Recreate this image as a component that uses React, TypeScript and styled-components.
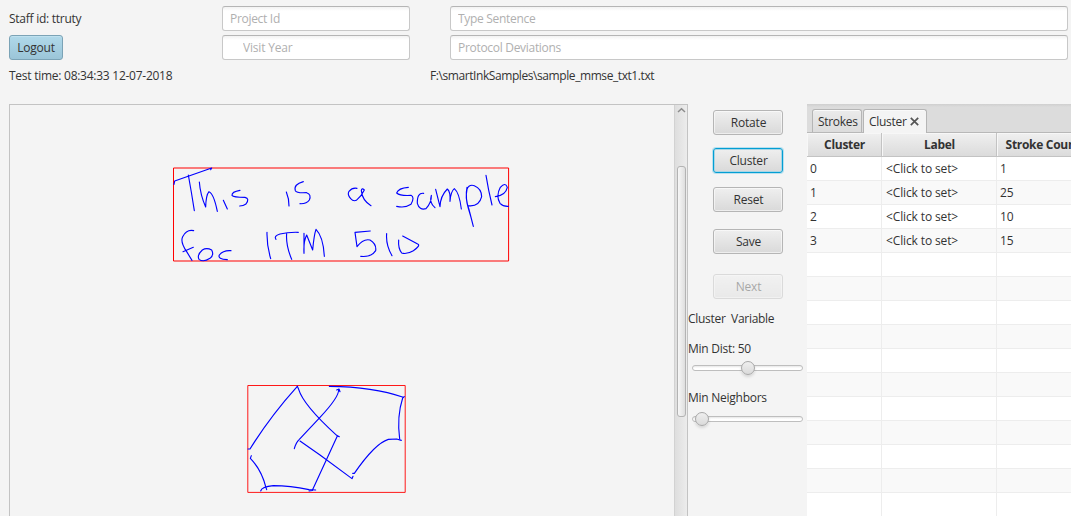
import React from "react";
import styled, { createGlobalStyle, css } from "styled-components";

const GlobalStyle = createGlobalStyle`
  * { box-sizing: border-box; }
  body {
    margin: 0;
    background: #f4f4f4;
    color: #333;
    font: 12px/16px "Open Sans", "Noto Sans", sans-serif;
    letter-spacing: -0.3px;
    overflow: hidden;
  }
`;

const Window = styled.div`
  width: 1071px;
  height: 516px;
  display: flex;
  flex-direction: column;
  overflow: hidden;
  background: #f4f4f4;
`;

const Header = styled.header`
  height: 104px;
  padding: 6px 3px 0 9px;
  display: grid;
  grid-template-columns: 213px 188px 40px 618px;
  grid-template-rows: 25px 25px 24px;
  row-gap: 4px;
  align-items: center;
`;

const Text = styled.span<{ $track?: number }>`
  white-space: pre;
  letter-spacing: ${(p) => p.$track ?? -0.26}px;
`;

const FilePath = styled(Text)`
  grid-column: 3 / 5;
  margin-left: 20px;
`;

const StaffCell = styled(Text)`
  grid-column: 1;
`;

const TestTime = styled(Text)`
  grid-column: 1 / 3;
`;

const Field = styled.input<{ $column: number; $indent?: number; $track?: number }>`
  grid-column: ${(p) => p.$column};
  width: 100%;
  height: 25px;
  padding: 0 7px 0 ${(p) => p.$indent ?? 7}px;
  border: 1px solid #c8c8c8;
  border-top-color: #b5b5b5;
  border-radius: 3px;
  outline: none;
  background: linear-gradient(#f2f2f2, #fff 4px);
  font: inherit;
  letter-spacing: ${(p) => p.$track ?? -0.3}px;
  &::placeholder { color: #b0b0b0; opacity: 1; }
`;

const buttonBase = css`
  height: 25px;
  padding: 0;
  border-radius: 3px;
  color: #333;
  font: inherit;
  text-align: center;
`;

const LogoutButton = styled.button`
  ${buttonBase}
  width: 54px;
  border: 1px solid #7ba3b6;
  background: linear-gradient(#b0d9ea, #9bc5d8);
  box-shadow: inset 0 1px #bfe1ef;
  letter-spacing: -0.2px;
`;

const ActionButton = styled.button<{ $gap: number; $focused?: boolean; $track?: number }>`
  ${buttonBase}
  display: block;
  width: 70px;
  margin: ${(p) => p.$gap}px 0 0 25px;
  padding-left: 1px;
  border: 1px solid #b5b5b5;
  background: linear-gradient(#efefef, #d9d9d9);
  box-shadow: inset 0 0 0 1px rgba(255, 255, 255, 0.55);
  letter-spacing: ${(p) => p.$track ?? -0.2}px;
  ${(p) =>
    p.$focused &&
    css`
      border-color: #039ed3;
      box-shadow: 0 0 0 1px #b9e0ee, inset 0 0 0 1px #a8d6e6;
    `}
  &:disabled {
    opacity: 0.4;
    color: #333;
  }
`;

const Workspace = styled.main`
  flex: 1;
  min-height: 0;
  display: flex;
  padding-left: 9px;
`;

const InkPane = styled.section`
  width: 679px;
  display: flex;
  border: 1px solid #c3c3c3;
  border-bottom: 0;
`;

const InkCanvas = styled.svg`
  width: 664px;
  height: 411px;
  flex: none;
`;

const ScrollBar = styled.div`
  width: 13px;
  display: flex;
  flex-direction: column;
  align-items: center;
  border-left: 1px solid #d2d2d2;
  background: linear-gradient(90deg, #dedede, #ececec);
`;

const ScrollArrow = styled.svg`
  width: 9px;
  height: 6px;
  margin-top: 2px;
  flex: none;
`;

const ScrollThumb = styled.div`
  width: 9px;
  height: 251px;
  margin-top: 53px;
  border: 1px solid #b3b3b3;
  border-radius: 3px;
  background: linear-gradient(90deg, #f7f7f7, #dedede);
`;

const Controls = styled.aside`
  width: 119px;
  flex: none;
`;

const ControlLabel = styled(Text)<{ $gap: number }>`
  display: block;
  margin-top: ${(p) => p.$gap}px;
`;

const SliderTrack = styled.div<{ $gap: number }>`
  display: flex;
  align-items: center;
  width: 111px;
  height: 6px;
  margin: ${(p) => p.$gap}px 0 0 4px;
  border: 1px solid #bebebe;
  border-radius: 3px;
  background: linear-gradient(#e6e6e6, #fff 2px);
`;

const SliderThumb = styled.div<{ $offset: number }>`
  width: 14px;
  height: 14px;
  flex: none;
  margin-left: ${(p) => p.$offset}px;
  border: 1px solid #a8a8a8;
  border-radius: 50%;
  background: linear-gradient(#efefef, #dadada);
  box-shadow: 0 2px 3px rgba(0, 0, 0, 0.12);
`;

const TablePane = styled.section`
  flex: 1;
  min-width: 0;
  overflow: hidden;
  background: #fff;
`;

const TabStrip = styled.div`
  height: 29px;
  padding: 5px 0 0 5px;
  display: flex;
  gap: 1px;
  border-bottom: 1px solid #b8b8b8;
  background: linear-gradient(#cfcfcf, #dcdcdc 3px, #dcdcdc);
`;

const Tab = styled.div<{ $width: number; $active?: boolean }>`
  width: ${(p) => p.$width}px;
  height: ${(p) => (p.$active ? 24 : 23)}px;
  padding: 4px 0 0 5px;
  display: flex;
  gap: 3px;
  border: 1px solid #b5b5b5;
  border-bottom: 0;
  border-radius: 3px 3px 0 0;
  background: ${(p) => (p.$active ? "#f4f4f4" : "linear-gradient(#ebebeb, #dcdcdc)")};
  box-shadow: inset 0 1px #fafafa;
`;

const CloseIcon = styled.svg`
  width: 9px;
  height: 9px;
  margin-top: 3px;
`;

const Row = styled.div<{ $striped?: boolean }>`
  height: 24px;
  width: 282px;
  display: grid;
  grid-template-columns: 75px 115px 92px;
  background: ${(p) => (p.$striped ? "#f9f9f9" : "#fff")};
`;

const Cell = styled.div<{ $indent: number }>`
  padding: 4px 0 0 ${(p) => p.$indent}px;
  border-right: 1px solid #ededed;
  border-bottom: 1px solid #ededed;
  letter-spacing: -0.13px;
`;

const HeadRow = styled(Row)`
  background: linear-gradient(#f0f0f0, #dadada);
`;

const HeadCell = styled.div<{ $track: number }>`
  padding: 4px 0 0 1px;
  border-right: 1px solid #c3c3c3;
  border-bottom: 1px solid #c3c3c3;
  box-shadow: inset 1px 1px #f7f7f7;
  font-weight: 700;
  text-align: center;
  white-space: nowrap;
  letter-spacing: ${(p) => p.$track}px;
`;

const clusters = [
  { id: 0, strokes: 1 },
  { id: 1, strokes: 25 },
  { id: 2, strokes: 10 },
  { id: 3, strokes: 15 },
];
const ROW_COUNT = 15;

const leftInk = [
  "M27 73L29 63L140 24L137 29",
  "M70 45Q80 100 88 152",
  "M103 66Q106 105 122 141Q123 105 132 95Q146 100 157 154",
  "M175 121L187 147",
  "M225 91Q200 95 201 106Q205 112 240 112Q255 115 243 132Q235 138 224 138",
  "M364 96Q372 115 372 138",
  "M415 65Q385 73 391 92Q395 100 425 98Q440 103 433 120Q425 132 405 131",
  "M86 212Q65 207 53 230Q45 245 65 275L81 301",
  "M54 275L85 262",
  "M112 270Q95 285 102 298Q115 308 135 295Q148 285 140 270Q125 262 112 270",
  "M198 272Q175 270 163 285Q157 297 187 299",
  "M306 217Q305 255 317 296",
  "M333 238Q325 228 345 222Q370 216 400 217",
  "M365 221Q362 255 380 298",
  "M417 220L417 280Q415 245 425 225L443 270Q447 225 453 208Q475 230 478 289",
];

const rightInk = [
  "M66 85Q52 82 42 94Q36 104 47 116Q55 125 64 121Q80 108 88 90Q80 82 79 92Q82 122 108 137",
  "M220 82Q190 84 185 99Q195 108 228 106Q240 112 228 133Q210 145 185 139",
  "M266 100Q246 97 247 130Q253 152 273 146Q290 128 289 106Q282 128 300 143",
  "M302 88L315 140Q316 108 337 87Q347 95 345 124Q347 95 358 86Q373 98 379 147",
  "M396 82Q390 112 400 145Q408 170 415 199L402 148Q390 115 396 88Q402 72 418 77Q440 86 440 110Q432 142 398 137",
  "M453 46Q460 90 471 135",
  "M481 110Q512 106 517 82Q511 65 496 82Q482 108 495 130Q505 140 520 139",
  "M106 213L60 217L66 260Q85 235 105 240Q125 252 122 272Q110 292 77 289",
  "M155 221Q152 255 171 287",
  "M203 228L248 252Q258 256 235 272Q215 284 200 279Q189 265 191 240",
];

const figureInk = [
  "M24 207L30 207Q90 110 172 19",
  "M172 19L176 28Q190 75 290 166L298 170L292 168Q275 205 217 331",
  "M290 30L297 27L300 35L296 28Q298 50 240 112L178 178Q168 187 163 206",
  "M180 183L240 225L336 296L339 289",
  "M338 280L343 280Q405 190 445 178L470 177L484 181",
  "M479 177Q470 110 488 54L493 50",
  "M268 19Q400 20 490 52",
  "M34 227L31 235Q65 270 78 323L80 329",
  "M62 333Q65 320 100 317Q150 317 207 329L227 330M207 333L217 331",
];

function Ink({ x, y, strokes }: { x: number; y: number; strokes: string[] }) {
  return (
    <g transform={`translate(${x} ${y}) scale(.33333)`} strokeWidth={3.4}>
      {strokes.map((d) => (
        <path key={d} d={d} />
      ))}
    </g>
  );
}

export default function App() {
  return (
    <>
      <GlobalStyle />
      <Window>
        <Header>
          <StaffCell>Staff id: ttruty</StaffCell>
          <Field $column={2} placeholder="Project Id" />
          <Field $column={4} placeholder="Type Sentence" />
          <LogoutButton>Logout</LogoutButton>
          <Field $column={2} $indent={20} $track={-0.2} placeholder="Visit Year" />
          <Field $column={4} placeholder="Protocol Deviations" />
          <TestTime>Test time: 08:34:33 12-07-2018</TestTime>
          <FilePath $track={-0.42}>{"F:\\smartInkSamples\\sample_mmse_txt1.txt"}</FilePath>
        </Header>
        <Workspace>
          <InkPane>
            <InkCanvas viewBox="10 105 664 411" fill="none">
              <g stroke="#f00">
                <path d="M173.5 168H508.6V261H173.5Z" />
                <path d="M247.8 385.5H405.2V492.4H247.8Z" strokeOpacity={0.9} />
              </g>
              <g stroke="#00f" strokeLinejoin="round" strokeLinecap="round">
                <Ink x={165} y={160} strokes={leftInk} />
                <Ink x={335} y={160} strokes={rightInk} />
                <Ink x={240} y={380} strokes={figureInk} />
              </g>
            </InkCanvas>
            <ScrollBar>
              <ScrollArrow viewBox="0 0 9 6" fill="none" stroke="#8c8c8c" strokeWidth="1.5">
                <path d="M1 5L4.5 1.8L8 5" />
              </ScrollArrow>
              <ScrollThumb />
            </ScrollBar>
          </InkPane>
          <Controls>
            <ActionButton $gap={6}>Rotate</ActionButton>
            <ActionButton $gap={13} $focused>Cluster</ActionButton>
            <ActionButton $gap={14}>Reset</ActionButton>
            <ActionButton $gap={17}>Save</ActionButton>
            <ActionButton $gap={20} disabled>Next</ActionButton>
            <ControlLabel $gap={12} $track={-0.3}>Cluster  Variable</ControlLabel>
            <ControlLabel $gap={14}>Min Dist: 50</ControlLabel>
            <SliderTrack $gap={8}>
              <SliderThumb $offset={48} />
            </SliderTrack>
            <ControlLabel $gap={19}>Min Neighbors</ControlLabel>
            <SliderTrack $gap={10}>
              <SliderThumb $offset={2} />
            </SliderTrack>
          </Controls>
          <TablePane>
            <TabStrip>
              <Tab $width={50}>Strokes</Tab>
              <Tab $width={64} $active>
                Cluster
                <CloseIcon viewBox="0 0 9 9" stroke="#555" strokeWidth="1.7">
                  <path d="M.8 .8L8.2 8.2M8.2 .8L.8 8.2" />
                </CloseIcon>
              </Tab>
            </TabStrip>
            <HeadRow>
              <HeadCell $track={-0.3}>Cluster</HeadCell>
              <HeadCell $track={-0.3}>Label</HeadCell>
              <HeadCell $track={-0.3}>Stroke Count</HeadCell>
            </HeadRow>
            {Array.from({ length: ROW_COUNT }, (_, i) => {
              const cluster = clusters[i];
              return (
                <Row key={i} $striped={i % 2 === 1}>
                  <Cell $indent={3}>{cluster?.id}</Cell>
                  <Cell $indent={4}>{cluster && "<Click to set>"}</Cell>
                  <Cell $indent={3}>{cluster?.strokes}</Cell>
                </Row>
              );
            })}
          </TablePane>
        </Workspace>
      </Window>
    </>
  );
}
